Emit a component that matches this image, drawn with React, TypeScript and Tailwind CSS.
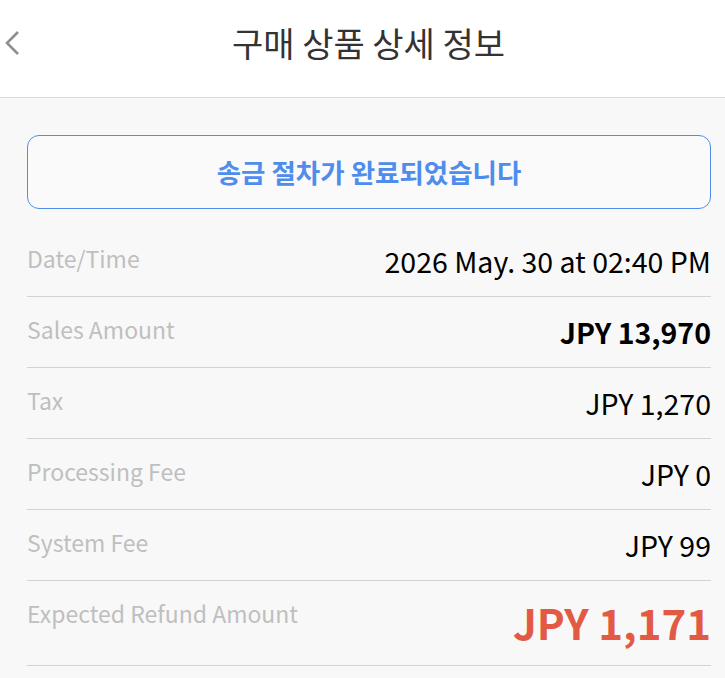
const rows = [
  { label: "Date/Time", value: "2026 May. 30 at 02:40 PM", bold: false },
  { label: "Sales Amount", value: "JPY 13,970", bold: true },
  { label: "Tax", value: "JPY 1,270", bold: false },
  { label: "Processing Fee", value: "JPY 0", bold: false },
  { label: "System Fee", value: "JPY 99", bold: false },
]

export default function App() {
  return (
    <div className="min-h-[678px] bg-[#f8f8f8] font-['Noto_Sans_CJK_KR',sans-serif]">
      <header className="relative flex h-[98px] items-center justify-center border-b border-[#dcdcdc] bg-white pb-[13px] pl-[12px]">
        <button className="absolute left-[3px] top-[30px] text-[#8f8f8f]">
          <svg width="18" height="26" viewBox="0 0 18 26" fill="none">
            <path d="M15 2 L4 13 L15 24" stroke="currentColor" strokeWidth="2.6" />
          </svg>
        </button>
        <h1 className="text-[34px] font-normal text-[#333333]">구매 상품 상세 정보</h1>
      </header>

      <main className="pl-[27px] pr-[14px] pt-[37px]">
        <div className="flex h-[74px] items-center justify-center rounded-[12px] border border-[#4f8ded] bg-[#fafafa]">
          <span className="text-[26.5px] font-bold text-[#4f8ded]">송금 절차가 완료되었습니다</span>
        </div>

        <dl className="mt-[17px]">
          {rows.map((r) => (
            <div key={r.label} className="flex h-[71px] items-start justify-between border-b border-[#d3d3d3] pt-[14px]">
              <dt className="text-[23px] leading-[36px] text-[#bfbfbf]">{r.label}</dt>
              <dd className={`text-[28.5px] leading-[42px] text-black ${r.bold ? "font-bold" : "font-normal"}`}>
                {r.value}
              </dd>
            </div>
          ))}
          <div className="flex h-[85px] items-start justify-between border-b border-[#d3d3d3] pt-[14px]">
            <dt className="text-[23px] leading-[36px] text-[#bfbfbf]">Expected Refund Amount</dt>
            <dd className="text-[42px] font-bold leading-[54px] text-[#e25a43]">JPY 1,171</dd>
          </div>
        </dl>
      </main>
    </div>
  )
}
